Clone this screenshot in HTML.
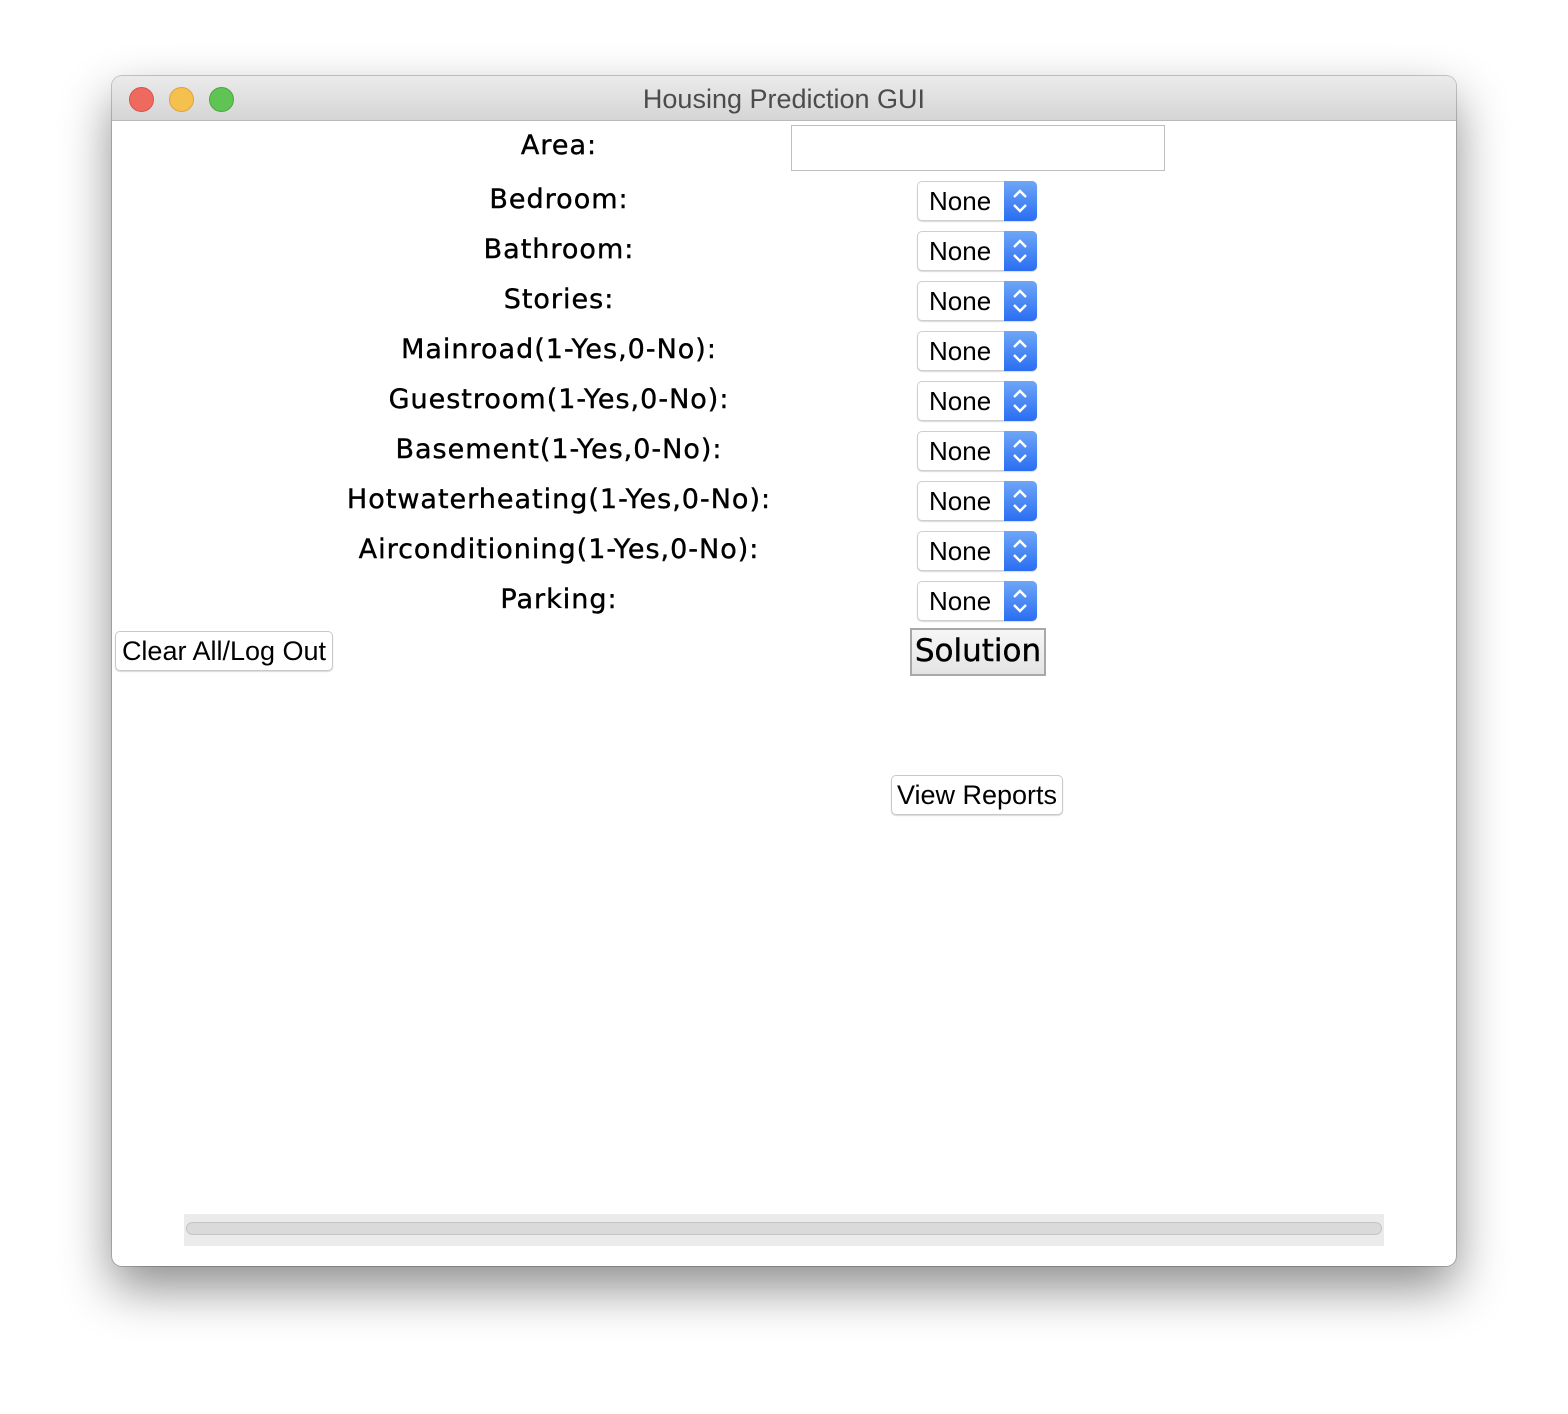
<!DOCTYPE html>
<html><head><style>
body{margin:0;width:1568px;height:1414px;background:#fff;position:relative;overflow:hidden;font-family:"Liberation Sans",sans-serif}
.win{position:absolute;left:112px;top:76px;width:1344px;height:1190px;background:#fff;border-radius:10px;box-shadow:0 22px 50px rgba(0,0,0,.45),0 0 0 1px rgba(0,0,0,.2);overflow:hidden}
.tb{position:absolute;left:0;top:0;width:100%;height:44px;background:linear-gradient(#ebebeb,#d5d5d5);border-bottom:1px solid #b9b9b9;text-align:center;line-height:46px;font-size:27px;color:#4c4c4c}
.dot{position:absolute;top:11px;width:23px;height:23px;border-radius:50%}
.lbl{position:absolute;left:0;width:894px;text-align:center;font-family:"DejaVu Sans",sans-serif;font-size:27px;letter-spacing:1px;color:#000;line-height:30px;-webkit-text-stroke:0.4px #000}
.sel{position:absolute;left:805px;width:118px;height:38px;border:1px solid #cfcfcf;border-radius:5px;background:#fff;box-shadow:0 1px 1px rgba(0,0,0,.15)}
.sel span{position:absolute;left:11px;top:4px;font-size:26px}
.sel i{position:absolute;right:-1px;top:-1px;width:33px;height:40px;background:linear-gradient(#6ea6f7,#2a6ef2);border-radius:0 5px 5px 0}
.sel svg{display:block}
.btn{position:absolute;border:1px solid #c8c8c8;border-radius:5px;background:#fff;box-shadow:0 1px 1px rgba(0,0,0,.15);font-size:27px;text-align:center}
</style></head><body>
<div class="win">
<div class="tb">Housing Prediction GUI
<div class="dot" style="left:17px;background:#ee6a5f;border:1px solid #d9534a"></div>
<div class="dot" style="left:57px;background:#f6c04f;border:1px solid #dca43a"></div>
<div class="dot" style="left:97px;background:#60c454;border:1px solid #4ba83f"></div>
</div>
<div style="position:absolute;left:679px;top:49px;width:372px;height:44px;border:1px solid #bfbfbf"></div>
<div class="lbl" style="top:55px">Area:</div>
<div class="lbl" style="top:109px">Bedroom:</div>
<div class="lbl" style="top:159px">Bathroom:</div>
<div class="lbl" style="top:209px">Stories:</div>
<div class="lbl" style="top:259px">Mainroad(1-Yes,0-No):</div>
<div class="lbl" style="top:309px">Guestroom(1-Yes,0-No):</div>
<div class="lbl" style="top:359px">Basement(1-Yes,0-No):</div>
<div class="lbl" style="top:409px">Hotwaterheating(1-Yes,0-No):</div>
<div class="lbl" style="top:459px">Airconditioning(1-Yes,0-No):</div>
<div class="lbl" style="top:509px">Parking:</div>

<div class="sel" style="top:105px"><span>None</span><i><svg width="33" height="40"><path d="M10 16l6-6 6 6M10 24l6 6 6-6" stroke="#fff" stroke-width="2.4" fill="none"/></svg></i></div>
<div class="sel" style="top:155px"><span>None</span><i><svg width="33" height="40"><path d="M10 16l6-6 6 6M10 24l6 6 6-6" stroke="#fff" stroke-width="2.4" fill="none"/></svg></i></div>
<div class="sel" style="top:205px"><span>None</span><i><svg width="33" height="40"><path d="M10 16l6-6 6 6M10 24l6 6 6-6" stroke="#fff" stroke-width="2.4" fill="none"/></svg></i></div>
<div class="sel" style="top:255px"><span>None</span><i><svg width="33" height="40"><path d="M10 16l6-6 6 6M10 24l6 6 6-6" stroke="#fff" stroke-width="2.4" fill="none"/></svg></i></div>
<div class="sel" style="top:305px"><span>None</span><i><svg width="33" height="40"><path d="M10 16l6-6 6 6M10 24l6 6 6-6" stroke="#fff" stroke-width="2.4" fill="none"/></svg></i></div>
<div class="sel" style="top:355px"><span>None</span><i><svg width="33" height="40"><path d="M10 16l6-6 6 6M10 24l6 6 6-6" stroke="#fff" stroke-width="2.4" fill="none"/></svg></i></div>
<div class="sel" style="top:405px"><span>None</span><i><svg width="33" height="40"><path d="M10 16l6-6 6 6M10 24l6 6 6-6" stroke="#fff" stroke-width="2.4" fill="none"/></svg></i></div>
<div class="sel" style="top:455px"><span>None</span><i><svg width="33" height="40"><path d="M10 16l6-6 6 6M10 24l6 6 6-6" stroke="#fff" stroke-width="2.4" fill="none"/></svg></i></div>
<div class="sel" style="top:505px"><span>None</span><i><svg width="33" height="40"><path d="M10 16l6-6 6 6M10 24l6 6 6-6" stroke="#fff" stroke-width="2.4" fill="none"/></svg></i></div>

<div class="btn" style="left:3px;top:555px;width:216px;height:38px;line-height:38px">Clear All/Log Out</div>
<div style="position:absolute;left:798px;top:552px;width:132px;height:44px;border:2px solid #a8a8a8;background:linear-gradient(#f6f6f6,#e4e4e4);font-family:'DejaVu Sans',sans-serif;font-size:31px;line-height:42px;text-align:center;-webkit-text-stroke:0.4px #000">Solution</div>
<div class="btn" style="left:779px;top:699px;width:170px;height:38px;line-height:38px">View Reports</div>

<div style="position:absolute;left:72px;top:1138px;width:1200px;height:32px;background:#ebebeb">
<div style="position:absolute;left:2px;top:8px;width:1194px;height:11px;border:1px solid #c4c4c4;border-radius:7px;background:#dadada"></div>
</div>
</div>
</body></html>
